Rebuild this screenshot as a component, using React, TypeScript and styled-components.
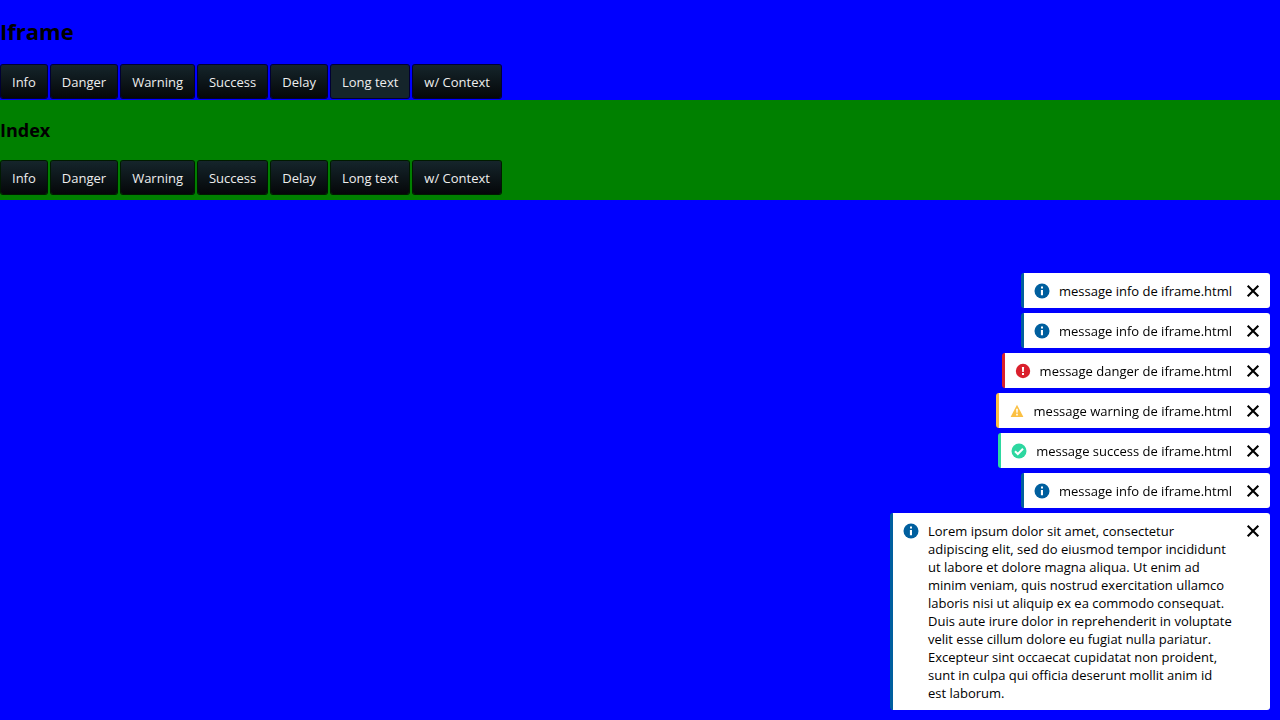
import React, { useState } from "react";
import styled, { createGlobalStyle } from "styled-components";

type Kind = "info" | "danger" | "warning" | "success";

const accents: Record<Kind, string> = {
  info: "#005f9e",
  danger: "#da202c",
  warning: "#fbc043",
  success: "#2dd7a0",
};

const GlobalStyle = createGlobalStyle`
  *, *::before, *::after {
    box-sizing: border-box;
  }

  body {
    margin: 0;
    background: #00f;
    color: #000;
    font-family: "Open Sans", "Liberation Sans", sans-serif;
    font-size: 13px;
    line-height: 18px;
  }
`;

const FramePanel = styled.section`
  padding: 16px 0 1px;
  background: #00f;
`;

const IndexPanel = styled.section`
  padding: 18px 0 5px;
  background: #008000;
`;

const FrameTitle = styled.h1`
  margin: 0 0 18px;
  font-size: 22px;
  line-height: 30px;
  font-weight: 700;
`;

const IndexTitle = styled.h2`
  margin: 0 0 18px;
  font-size: 18px;
  line-height: 24px;
  font-weight: 700;
`;

const Toolbar = styled.div`
  display: flex;
  flex-wrap: wrap;
  gap: 2px;
`;

const ActionButton = styled.button<{ $active?: boolean }>`
  height: 35px;
  padding: 0 11px;
  border: 1px solid rgba(0, 0, 0, 0.8);
  border-radius: 3px;
  background: ${({ $active }) =>
    $active ? "#15252b" : "linear-gradient(#15252b, #050709)"};
  background-clip: padding-box;
  color: #eee;
  font: inherit;
  cursor: pointer;
`;

const ToastList = styled.div`
  position: fixed;
  right: 10px;
  bottom: 10px;
  display: flex;
  flex-direction: column;
  align-items: flex-end;
  gap: 5px;
`;

const ToastCard = styled.div<{ $kind: Kind }>`
  display: flex;
  align-items: flex-start;
  max-width: 380px;
  padding: 9px 10px 8px;
  border-left: 3px solid ${({ $kind }) => accents[$kind]};
  border-radius: 3px;
  background: #fff;
`;

const IconSlot = styled.span`
  flex: none;
  width: 16px;
  height: 18px;
  margin-right: 9px;

  svg {
    display: block;
    margin-top: 1px;
  }
`;

const Message = styled.p`
  flex: 0 1 auto;
  margin: 0;
`;

const CloseButton = styled.button`
  flex: none;
  width: 14px;
  height: 18px;
  margin-left: 14px;
  padding: 0;
  border: 0;
  background: none;
  color: #000;
  cursor: pointer;

  svg {
    display: block;
  }
`;

function KindIcon({ kind }: { kind: Kind }) {
  const color = accents[kind];
  return (
    <svg width="16" height="16" viewBox="0 0 16 16" aria-hidden="true">
      {kind === "info" && (
        <>
          <circle cx="8" cy="8" r="7.5" fill={color} />
          <path d="M7 3.4h2v2H7zM6.9 6.9H9v5.4H6.9z" fill="#fff" />
        </>
      )}
      {kind === "danger" && (
        <>
          <circle cx="8" cy="8" r="7.2" fill={color} />
          <path d="M6.9 4h2.2l-.3 5H7.2zM7 10h2v1.9H7z" fill="#fff" />
        </>
      )}
      {kind === "warning" && (
        <>
          <path d="M8 1.8 14.4 14H1.6z" fill={color} />
          <path d="M7.1 5.8h1.8l-.3 4H7.4zM7.2 10.8h1.6v1.6H7.2z" fill="#fff" />
        </>
      )}
      {kind === "success" && (
        <>
          <circle cx="8" cy="8" r="7.5" fill={color} />
          <path d="m4 8.2 2.8 2.8 5.2-5.3" fill="none" stroke="#fff" strokeWidth="2" />
        </>
      )}
    </svg>
  );
}

const actions = ["Info", "Danger", "Warning", "Success", "Delay", "Long text", "w/ Context"];

const lorem =
  "Lorem ipsum dolor sit amet, consectetur adipiscing elit, sed do eiusmod tempor incididunt ut labore et dolore magna aliqua. Ut enim ad minim veniam, quis nostrud exercitation ullamco laboris nisi ut aliquip ex ea commodo consequat. Duis aute irure dolor in reprehenderit in voluptate velit esse cillum dolore eu fugiat nulla pariatur. Excepteur sint occaecat cupidatat non proident, sunt in culpa qui officia deserunt mollit anim id est laborum.";

const initialToasts: { id: number; kind: Kind; text: string }[] = [
  { id: 1, kind: "info", text: "message info de iframe.html" },
  { id: 2, kind: "info", text: "message info de iframe.html" },
  { id: 3, kind: "danger", text: "message danger de iframe.html" },
  { id: 4, kind: "warning", text: "message warning de iframe.html" },
  { id: 5, kind: "success", text: "message success de iframe.html" },
  { id: 6, kind: "info", text: "message info de iframe.html" },
  { id: 7, kind: "info", text: lorem },
];

function Actions({ active }: { active?: string }) {
  return (
    <Toolbar>
      {actions.map((label) => (
        <ActionButton key={label} type="button" $active={label === active}>
          {label}
        </ActionButton>
      ))}
    </Toolbar>
  );
}

export default function App() {
  const [toasts, setToasts] = useState(initialToasts);
  const dismiss = (id: number) => setToasts((list) => list.filter((t) => t.id !== id));

  return (
    <>
      <GlobalStyle />
      <main>
        <FramePanel>
          <FrameTitle>Iframe</FrameTitle>
          <Actions active="Long text" />
        </FramePanel>
        <IndexPanel>
          <IndexTitle>Index</IndexTitle>
          <Actions />
        </IndexPanel>
      </main>
      <ToastList role="status">
        {toasts.map(({ id, kind, text }) => (
          <ToastCard key={id} $kind={kind}>
            <IconSlot>
              <KindIcon kind={kind} />
            </IconSlot>
            <Message>{text}</Message>
            <CloseButton type="button" aria-label="Close" onClick={() => dismiss(id)}>
              <svg width="14" height="18" viewBox="0 0 14 18" aria-hidden="true">
                <path d="m1.7 3.7 10.6 10.6M12.3 3.7 1.7 14.3" stroke="currentColor" strokeWidth="2.1" />
              </svg>
            </CloseButton>
          </ToastCard>
        ))}
      </ToastList>
    </>
  );
}
